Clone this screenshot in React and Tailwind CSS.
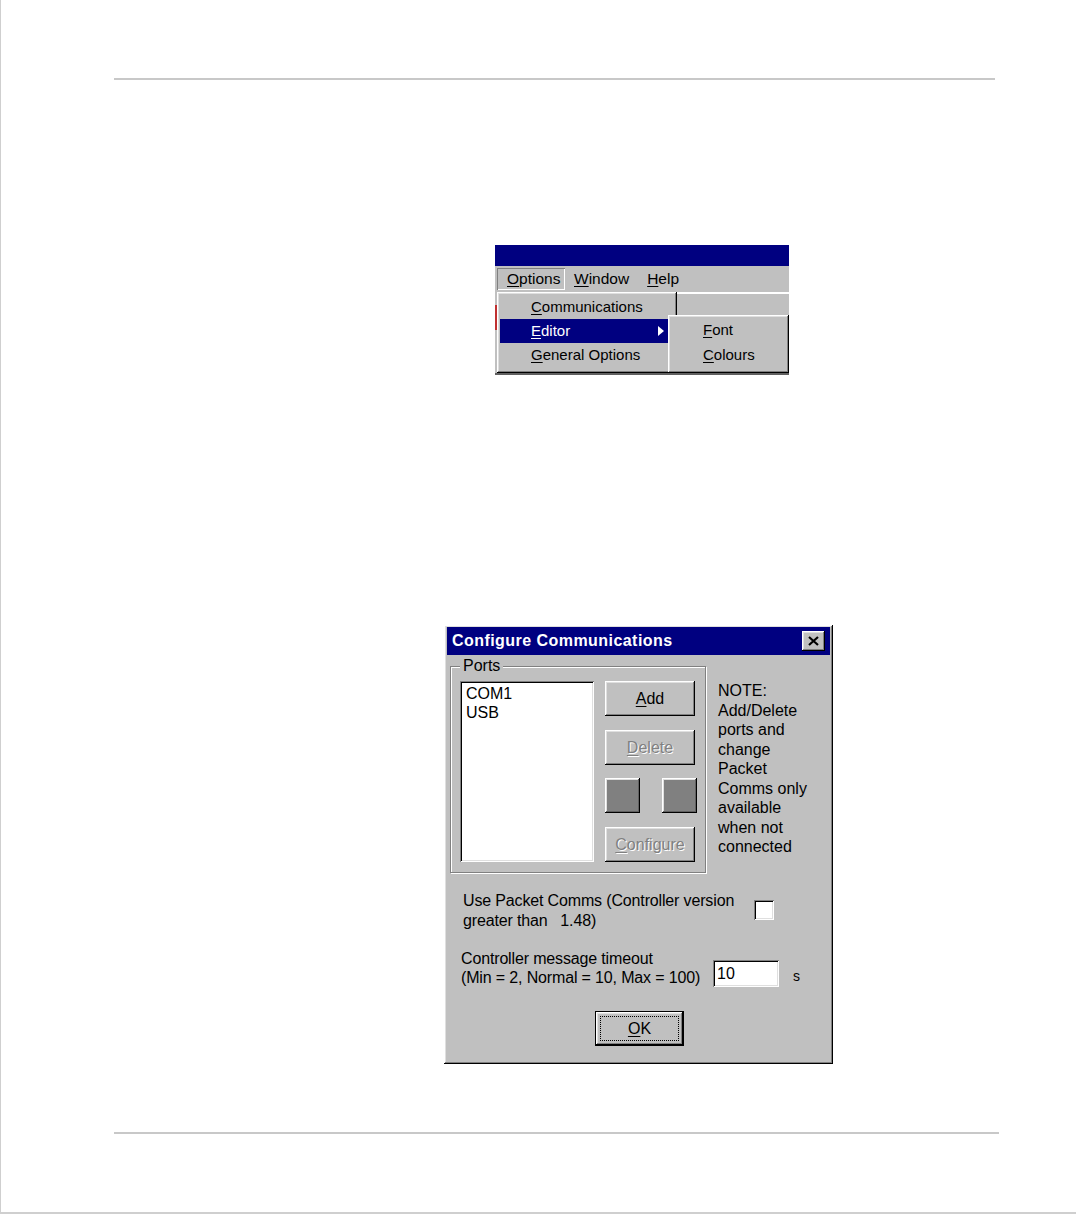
import React from 'react';

const raised =
  'shadow-[inset_-1px_-1px_0_#000,inset_1px_1px_0_#fff,inset_-2px_-2px_0_#808080,inset_2px_2px_0_#dfdfdf]';
const sunken =
  'shadow-[inset_1px_1px_0_#808080,inset_-1px_-1px_0_#fff,inset_2px_2px_0_#000,inset_-2px_-2px_0_#dfdfdf]';

function Key({ children }) {
  return <span className="underline underline-offset-2 decoration-1">{children}</span>;
}

function Button({ children, disabled, className = '' }) {
  return (
    <div
      className={`flex items-center justify-center bg-[#c0c0c0] ${raised} ${
        disabled ? 'text-[#808080] [text-shadow:1px_1px_0_#fff]' : 'text-black'
      } ${className}`}
    >
      {children}
    </div>
  );
}

function MenuShot() {
  return (
    <div className="relative w-[294px] h-[130px] bg-[#c0c0c0] overflow-hidden text-[15px] text-black">
      {/* title bar */}
      <div className="h-[21px] bg-[#000080]" />
      {/* menu bar */}
      <div className="h-[26px] flex items-center pl-[2px] text-[15.5px]">
        <div className="h-[22px] w-[68px] flex items-center pl-[10px] shadow-[inset_1px_1px_0_#808080,inset_-1px_-1px_0_#fff]">
          <Key>O</Key>ptions
        </div>
        <div className="ml-[9px]">
          <Key>W</Key>indow
        </div>
        <div className="ml-[18px]">
          <Key>H</Key>elp
        </div>
      </div>
      {/* window behind */}
      <div className="h-[2px] ml-[180px] bg-white" />
      <div className="absolute left-0 top-[60px] w-[2px] h-[25px] bg-[#c03030]" />
      <div className="absolute left-0 bottom-0 w-full h-[2px] bg-[#606060]" />

      {/* dropdown */}
      <div className={`absolute left-[2px] top-[47px] w-[180px] h-[81px] bg-[#c0c0c0] ${raised} p-[3px]`}>
        <div className="h-[24px] flex items-center pl-[31px]">
          <Key>C</Key>ommunications
        </div>
        <div className="h-[24px] flex items-center pl-[31px] bg-[#000080] text-white relative w-[168px]">
          <Key>E</Key>ditor
          <svg className="absolute right-[4px] top-[7px]" width="6" height="10" viewBox="0 0 6 10">
            <path d="M0 0 L6 5 L0 10 Z" fill="#fff" />
          </svg>
        </div>
        <div className="h-[25px] flex items-center pl-[31px]">
          <Key>G</Key>eneral Options
        </div>
      </div>

      {/* submenu */}
      <div className={`absolute left-[173px] top-[70px] w-[121px] h-[58px] bg-[#c0c0c0] ${raised} pt-[3px]`}>
        <div className="h-[25px] flex items-center pl-[35px]">
          <Key>F</Key>ont
        </div>
        <div className="h-[25px] flex items-center pl-[35px]">
          <Key>C</Key>olours
        </div>
      </div>
    </div>
  );
}

function Dialog() {
  return (
    <div className={`w-[389px] h-[439px] bg-[#c0c0c0] ${raised} p-[3px] pt-[2px] text-[16px] text-black`}>
      {/* title */}
      <div className="h-[28px] bg-[#000080] flex items-center justify-between pl-[5px] pr-[5px]">
        <span className="text-white font-bold text-[16px] tracking-[0.45px]">Configure Communications</span>
        <div className={`w-[23px] h-[20px] bg-[#c0c0c0] ${raised} flex items-center justify-center`}>
          <svg width="11" height="10" viewBox="0 0 11 10">
            <path d="M1 1 L10 9 M10 1 L1 9" stroke="#000" strokeWidth="2.2" />
          </svg>
        </div>
      </div>

      <div className="flex mt-[11px] ml-[3px]">
        {/* ports group */}
        <div className="relative w-[256px] h-[207px] border border-[#808080] shadow-[inset_1px_1px_0_#fff,1px_1px_0_#fff] flex pt-[14px] pl-[9px]">
          <span className="absolute left-[9px] -top-[11px] px-[3px] bg-[#c0c0c0] leading-[20px]">Ports</span>
          <div className={`w-[134px] h-[181px] bg-white ${sunken} pt-[3px] pl-[6px] leading-[19px]`}>
            <div>COM1</div>
            <div>USB</div>
          </div>
          <div className="ml-[11px] flex flex-col w-[92px]">
            <Button className="w-[90px] h-[35px]">
              <Key>A</Key>dd
            </Button>
            <Button disabled className="w-[90px] h-[35px] mt-[14px]">
              <Key>D</Key>elete
            </Button>
            <div className="flex justify-between mt-[13px]">
              <div className="w-[35px] h-[35px] bg-[#808080] shadow-[inset_-1px_-1px_0_#000,inset_1px_1px_0_#fff,inset_-2px_-2px_0_#606060,inset_2px_2px_0_#dfdfdf]" />
              <div className="w-[35px] h-[35px] bg-[#808080] shadow-[inset_-1px_-1px_0_#000,inset_1px_1px_0_#fff,inset_-2px_-2px_0_#606060,inset_2px_2px_0_#dfdfdf]" />
            </div>
            <Button disabled className="w-[90px] h-[35px] mt-[14px]">
              <Key>C</Key>onfigure
            </Button>
          </div>
        </div>
        {/* note */}
        <div className="ml-[12px] mt-[15px] leading-[19.5px]">
          <div>NOTE:</div>
          <div>Add/Delete</div>
          <div>ports and</div>
          <div>change</div>
          <div>Packet</div>
          <div>Comms only</div>
          <div>available</div>
          <div>when not</div>
          <div>connected</div>
        </div>
      </div>

      {/* packet comms */}
      <div className="flex items-start mt-[18px] pl-[16px]">
        <div className="leading-[20px] w-[284px] tracking-[-0.15px]">
          <div>Use Packet Comms (Controller version</div>
          <div>greater than&nbsp;&nbsp; 1.48)</div>
        </div>
        <div className={`w-[20px] h-[20px] bg-white ${sunken} mt-[9px] ml-[7px]`} />
      </div>

      {/* timeout */}
      <div className="flex items-end mt-[18px] pl-[14px]">
        <div className="leading-[19px] w-[252px] tracking-[-0.15px]">
          <div>Controller message timeout</div>
          <div>(Min = 2, Normal = 10, Max = 100)</div>
        </div>
        <div className={`w-[66px] h-[27px] bg-white ${sunken} pl-[4px] leading-[27px]`}>10</div>
        <div className="ml-[14px] mb-[1px] leading-[19px] text-[14px]">s</div>
      </div>

      {/* ok */}
      <div className="flex justify-center mt-[24px] pl-[2px]">
        <div className="w-[89px] h-[35px] border border-black">
          <div className={`w-full h-full ${raised} p-[4px]`}>
            <div className="w-full h-full border border-dotted border-black flex items-center justify-center">
              <Key>O</Key>K
            </div>
          </div>
        </div>
      </div>
    </div>
  );
}

export default function App() {
  return (
    <div
      className="w-[1076px] h-[1214px] bg-white border-l border-b-2 border-[#cfcfcf] flex flex-col"
      style={{ fontFamily: '"Liberation Sans", Arial, sans-serif' }}
    >
      <div className="h-[2px] w-[881px] ml-[113px] mt-[78px] bg-[#c8c8c8]" />
      <div className="ml-[494px] mt-[165px]">
        <MenuShot />
      </div>
      <div className="ml-[443px] mt-[250px]">
        <Dialog />
      </div>
      <div className="h-[2px] w-[885px] ml-[113px] mt-[68px] bg-[#c8c8c8]" />
    </div>
  );
}
